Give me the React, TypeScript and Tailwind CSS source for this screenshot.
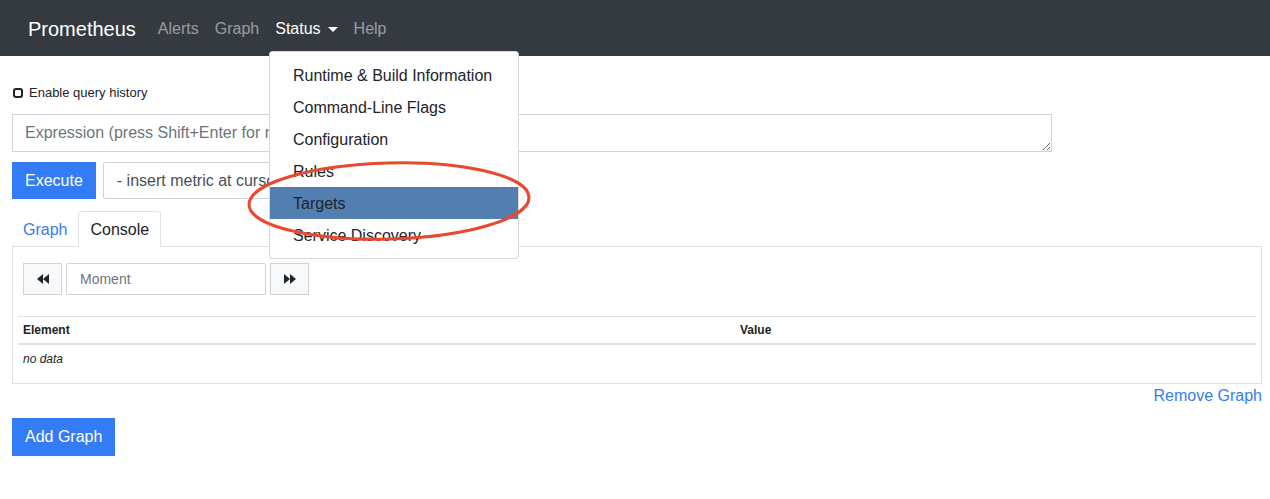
import React from "react";

const font = { fontFamily: '"Liberation Sans", Arial, sans-serif' };

function Backward() {
  return (
    <svg width="12" height="10" viewBox="0 0 12 10" fill="#212529">
      <polygon points="6,0 6,10 0,5" />
      <polygon points="12,0 12,10 6,5" />
    </svg>
  );
}
function Forward() {
  return (
    <svg width="12" height="10" viewBox="0 0 12 10" fill="#212529">
      <polygon points="0,0 0,10 6,5" />
      <polygon points="6,0 6,10 12,5" />
    </svg>
  );
}

export default function App() {
  const items = [
    "Runtime & Build Information",
    "Command-Line Flags",
    "Configuration",
    "Rules",
    "Targets",
    "Service Discovery",
  ];
  return (
    <div className="relative w-[1270px] h-[499px] bg-white text-[#212529] overflow-hidden" style={font}>
      {/* Navbar */}
      <nav className="h-[56px] bg-[#343a40] flex items-center pl-[28px] pt-[2px]">
        <span className="text-[20px] text-white mr-[14px]">Prometheus</span>
        <span className="px-[8px] text-[16px] text-white/50">Alerts</span>
        <span className="px-[8px] text-[16px] text-white/50">Graph</span>
        <span className="px-[8px] text-[16px] text-white flex items-center">
          Status
          <span className="ml-[7px] w-0 h-0 border-l-[5px] border-r-[5px] border-t-[5px] border-l-transparent border-r-transparent border-t-white" />
        </span>
        <span className="px-[8px] text-[16px] text-white/50">Help</span>
      </nav>

      <div className="pl-[12px] pr-[8px]">
        {/* checkbox */}
        <div className="mt-[27px] h-[20px] flex items-center">
          <span className="ml-[1px] w-[10px] h-[10px] border-2 border-[#222] rounded-[3px]" />
          <span className="ml-[6px] text-[13px]">Enable query history</span>
        </div>

        {/* textarea */}
        <textarea
          className="mt-[11px] block w-[1040px] h-[38px] border border-[#ced4da] px-[12px] py-[6px] text-[16px] leading-[24px] placeholder:text-[#6c757d] outline-none"
          placeholder="Expression (press Shift+Enter for newlines)"
          style={font}
        />

        {/* Execute row */}
        <div className="mt-[10px] flex gap-[7px]">
          <div className="h-[37px] px-[13px] bg-[#347bf6] text-white text-[16px] flex items-center">Execute</div>
          <div className="h-[37px] w-[320px] border border-[#ced4da] rounded-[2px] px-[13px] text-[16px] flex items-center text-[#495057]">
            - insert metric at cursor -
          </div>
        </div>

        {/* tabs */}
        <div className="mt-[12px] flex items-end h-[35px]">
          <div className="px-[11px] h-[35px] pt-[2px] flex items-center text-[16px] text-[#347bf6]">Graph</div>
          <div className="relative -mb-px z-10 h-[36px] pt-[1px] px-[11px] flex items-center text-[16px] border border-[#dee2e6] border-b-white bg-white rounded-t-[4px]">
            Console
          </div>
        </div>

        {/* panel */}
        <div className="border border-[#dee2e6] px-[5px] pt-[16px] pb-[10px]">
          <div className="flex gap-[4px] pl-[5px]">
            <div className="w-[39px] h-[32px] bg-[#f8f9fa] border border-[#ced4da] flex items-center justify-center">
              <Backward />
            </div>
            <div className="w-[200px] h-[32px] border border-[#ced4da] rounded-[2px] flex items-center pl-[13px] text-[14px] text-[#6c757d]">
              Moment
            </div>
            <div className="w-[39px] h-[32px] bg-[#f8f9fa] border border-[#ced4da] flex items-center justify-center">
              <Forward />
            </div>
          </div>
          <div className="mt-[21px] text-[12px]">
            <div className="h-[29px] border-t border-b-2 border-[#dee2e6] flex items-center font-bold">
              <div className="w-[717px] px-[5px]">Element</div>
              <div className="px-[5px]">Value</div>
            </div>
            <div className="h-[28px] flex items-center italic px-[5px]">no data</div>
          </div>
        </div>

        <div className="flex justify-end">
          <span className="text-[16px] leading-[24px] text-[#347bf6]">Remove Graph</span>
        </div>

        <div className="mt-[10px] inline-flex h-[38px] px-[13px] items-center bg-[#347bf6] text-white text-[16px]">Add Graph</div>
      </div>

      {/* Dropdown */}
      <div className="absolute left-[269px] top-[51px] w-[250px] h-[208px] bg-white border border-black/15 rounded-[4px] py-[7px] z-20">
        {items.map((it) => (
          <div
            key={it}
            className={
              it === "Targets"
                ? "h-[32px] flex items-center pt-[1px] px-[23px] text-[16px] bg-[#527eb0] text-[#212529]"
                : "h-[32px] flex items-center pt-[1px] px-[23px] text-[16px] text-[#212529]"
            }
          >
            {it}
          </div>
        ))}
      </div>

      {/* Red ellipse annotation */}
      <svg className="absolute left-0 top-0 z-30 pointer-events-none" width="1270" height="499">
        <ellipse cx="389" cy="201" rx="140" ry="38" fill="none" stroke="#e8492f" strokeWidth="3" transform="rotate(-1.5 389 201)" />
      </svg>
    </div>
  );
}
